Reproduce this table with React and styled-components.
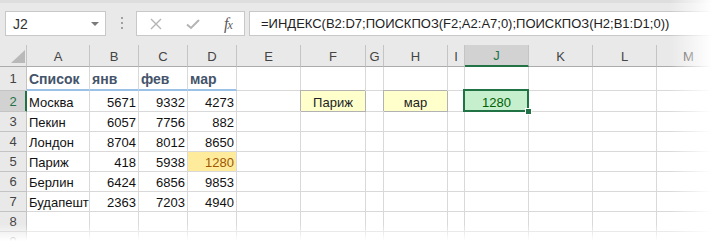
import React from 'react'
import styled, { createGlobalStyle, css } from 'styled-components'

const GlobalStyle = createGlobalStyle`
  html, body {
    margin: 0;
    background: #fff;
  }
`

const columns = [
  ['A', 63], ['B', 49], ['C', 49], ['D', 49], ['E', 64], ['F', 65], ['G', 18],
  ['H', 64], ['I', 17], ['J', 64], ['K', 64], ['L', 64], ['M', 64],
]

const rows = [
  { n: 1, head: true, cells: { A: 'Список', B: 'янв', C: 'фев', D: 'мар' } },
  { n: 2, cells: { A: 'Москва', B: 5671, C: 9332, D: 4273, F: 'Париж', H: 'мар', J: 1280 } },
  { n: 3, cells: { A: 'Пекин', B: 6057, C: 7756, D: 882 } },
  { n: 4, cells: { A: 'Лондон', B: 8704, C: 8012, D: 8650 } },
  { n: 5, cells: { A: 'Париж', B: 418, C: 5938, D: 1280 } },
  { n: 6, cells: { A: 'Берлин', B: 6424, C: 6856, D: 9853 } },
  { n: 7, cells: { A: 'Будапешт', B: 2363, C: 7203, D: 4940 } },
  { n: 8, cells: {} },
  { n: 9, cells: {} },
]

// cell styles that differ from the plain grid
const styles = {
  F2: 'input',
  H2: 'input',
  J2: 'good',
  D5: 'neutral',
}

const active = { col: 'J', row: 2 }

const Page = styled.div`
  position: relative;
  width: 712px;
  height: 241px;
  overflow: hidden;
  background: #fff;
  font-family: "Liberation Sans", Arial, sans-serif;

  &::after {
    content: '';
    position: absolute;
    inset: 0;
    pointer-events: none;
    background:
      linear-gradient(to right, rgba(255,255,255,0) 94%, #fff 100%),
      linear-gradient(to bottom, rgba(255,255,255,0) 93%, #fff 100%);
  }
`

const Toolbar = styled.div`
  height: 45px;
  box-sizing: border-box;
  background: #e9e9e9;
  border-top: 3px solid #dedede;
  display: flex;
  align-items: flex-start;
  padding: 8px 0 0 5px;
`

const Field = styled.div`
  height: 25px;
  box-sizing: border-box;
  background: #fff;
  border: 1px solid #c8c8c8;
  display: flex;
  align-items: center;
`

const NameBox = styled(Field)`
  width: 101px;
  justify-content: space-between;
  padding: 0 6px 0 7px;
  font-size: 14px;
  color: #333;
`

const DropArrow = styled.span`
  width: 0;
  height: 0;
  border-left: 4px solid transparent;
  border-right: 4px solid transparent;
  border-top: 4px solid #7a7a7a;
`

const Grip = styled.div`
  display: flex;
  flex-direction: column;
  gap: 3px;
  margin: 6px 13px 0 15px;

  span {
    width: 2px;
    height: 2px;
    background: #a0a0a0;
  }
`

const FxButtons = styled(Field)`
  width: 109px;
  display: grid;
  grid-template-columns: 38px 36px 34px;
  justify-items: center;
`

const Fx = styled.span`
  font-family: "Liberation Serif", "Times New Roman", serif;
  font-style: italic;
  font-size: 16px;
  color: #5a5a5a;
  letter-spacing: -1px;

  small {
    font-size: 12px;
  }
`

const FormulaInput = styled(Field)`
  flex: 1;
  margin-left: 4px;
  padding-left: 11px;
  font-size: 13px;
  color: #222;
  white-space: nowrap;
  border-right: none;
`

const Sheet = styled.div`
  display: grid;
  grid-template-columns: 27px ${columns.map(([, w]) => `${w}px`).join(' ')};
  grid-template-rows: 22px 24px 21px repeat(7, 20px);
`

const Header = styled.div`
  box-sizing: border-box;
  background: ${p => (p.$active ? '#d2d2d2' : '#e9e9e9')};
  color: ${p => (p.$active ? '#217346' : '#444')};
  border-right: 1px solid #c4c4c4;
  border-bottom: 1px solid #c4c4c4;
  font-size: 13px;
  display: flex;
  justify-content: center;
`

const Corner = styled(Header)`
  justify-content: flex-end;
  align-items: flex-end;
  padding: 0 1px 3px 0;
  border-bottom-color: #ababab;
`

const ColHead = styled(Header)`
  align-items: flex-end;
  padding-bottom: 2px;
  border-bottom-color: #ababab;
  ${p => p.$active && css`
    border-bottom: 2px solid #217346;
  `}
`

const RowHead = styled(Header)`
  align-items: center;
  ${p => p.$active && css`
    border-right-color: #217346;
    box-shadow: inset -1px 0 0 #217346;
  `}
`

const variants = {
  input: css`
    background: #ffffcc;
    color: #222;
    justify-content: center;
    border-color: #b2b2b2;
    box-shadow: -1px -1px 0 0 #b2b2b2;
  `,
  good: css`
    background: #c6efce;
    color: #006100;
    justify-content: center;
  `,
  neutral: css`
    background: #ffeb9c;
    color: #9c5700;
  `,
}

const Cell = styled.div`
  position: relative;
  box-sizing: border-box;
  border-right: 1px solid #d9d9d9;
  border-bottom: 1px solid #d9d9d9;
  padding: 0 2px 1px 2px;
  display: flex;
  align-items: flex-end;
  justify-content: ${p => (p.$number ? 'flex-end' : 'flex-start')};
  font-size: 13px;
  line-height: 15px;
  color: #111;
  white-space: nowrap;
  overflow: ${p => (p.$selected ? 'visible' : 'hidden')};

  ${p => p.$head && css`
    font-weight: bold;
    font-size: 14px;
    color: #44546a;
    padding-bottom: 2px;
    border-bottom: 2px solid #9bc2e6;
  `}

  ${p => variants[p.$variant]}

  ${p => p.$selected && css`
    z-index: 1;
    &::before {
      content: '';
      position: absolute;
      inset: -2px -1px -1px -2px;
      border: 2px solid #217346;
    }
    &::after {
      content: '';
      position: absolute;
      right: -4px;
      bottom: -4px;
      width: 5px;
      height: 5px;
      background: #217346;
      border: 1px solid #fff;
    }
  `}
`

function CellIcon({ kind }) {
  if (kind === 'cancel') {
    return (
      <svg width="12" height="12" viewBox="0 0 12 12">
        <path d="M1 1 L11 11 M11 1 L1 11" stroke="#b4b4b4" strokeWidth="1.4" fill="none" />
      </svg>
    )
  }
  return (
    <svg width="14" height="12" viewBox="0 0 14 12">
      <path d="M1 6.5 L5 10 L13 2" stroke="#b4b4b4" strokeWidth="2" fill="none" />
    </svg>
  )
}

function FormulaBar() {
  return (
    <Toolbar>
      <NameBox>
        J2
        <DropArrow />
      </NameBox>
      <Grip><span /><span /><span /></Grip>
      <FxButtons>
        <CellIcon kind="cancel" />
        <CellIcon kind="enter" />
        <Fx>f<small>x</small></Fx>
      </FxButtons>
      <FormulaInput>=ИНДЕКС(B2:D7;ПОИСКПОЗ(F2;A2:A7;0);ПОИСКПОЗ(H2;B1:D1;0))</FormulaInput>
    </Toolbar>
  )
}

export default function App() {
  return (
    <Page>
      <GlobalStyle />
      <FormulaBar />
      <Sheet>
        <Corner>
          <svg width="14" height="13" viewBox="0 0 14 13">
            <polygon points="14,0 14,13 0,13" fill="#b9b9b9" />
          </svg>
        </Corner>
        {columns.map(([key]) => (
          <ColHead key={key} $active={key === active.col}>{key}</ColHead>
        ))}
        {rows.map(row => (
          <React.Fragment key={row.n}>
            <RowHead $active={row.n === active.row}>{row.n}</RowHead>
            {columns.map(([key]) => {
              const value = row.cells[key]
              const id = `${key}${row.n}`
              const isHead = row.head && value !== undefined
              return (
                <Cell
                  key={id}
                  $head={isHead}
                  $number={typeof value === 'number'}
                  $variant={styles[id]}
                  $selected={key === active.col && row.n === active.row}
                >
                  {value}
                </Cell>
              )
            })}
          </React.Fragment>
        ))}
      </Sheet>
    </Page>
  )
}
